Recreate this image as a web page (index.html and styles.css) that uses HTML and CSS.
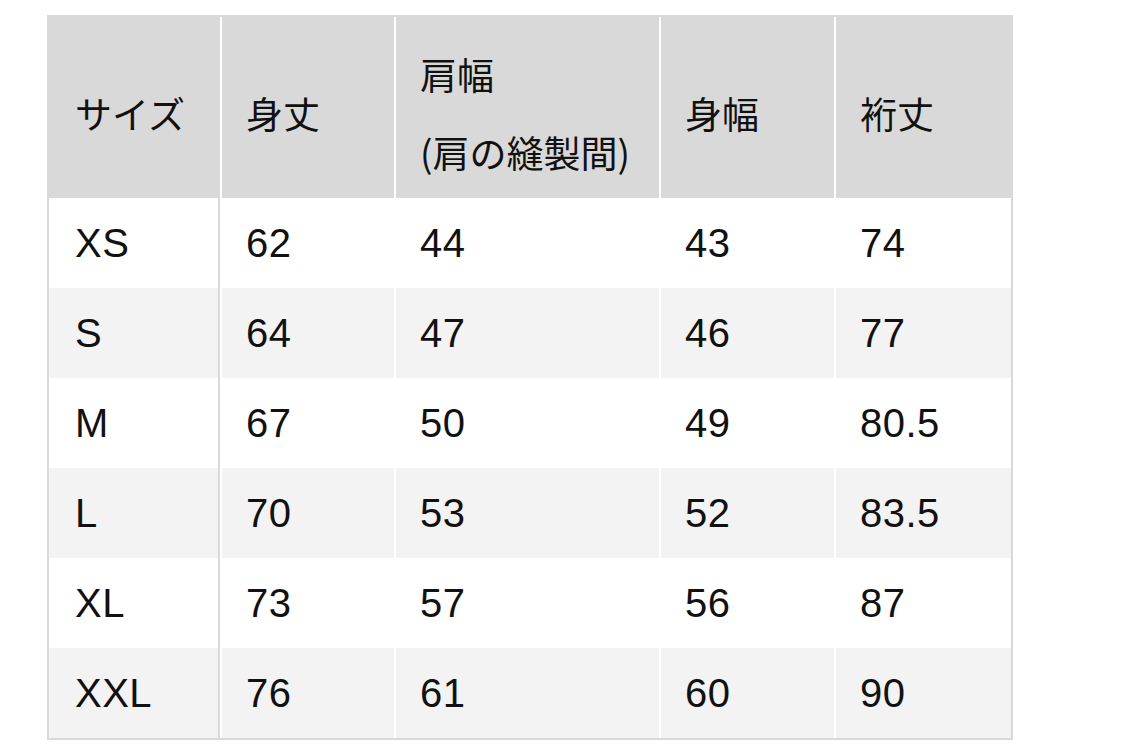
FILE: index.html
```html
<!DOCTYPE html>
<html lang="ja">
<head>
<meta charset="utf-8">
<title>サイズ表</title>
<link rel="stylesheet" href="styles.css">
</head>
<body>
<div class="page">
  <table class="size-table">
    <thead>
      <tr>
        <th class="c1"><span class="jp">サイズ</span></th>
        <th class="c2"><span class="jp">身丈</span></th>
        <th class="c3"><span class="jp">肩幅<br>(肩の縫製間)</span></th>
        <th class="c4"><span class="jp">身幅</span></th>
        <th class="c5"><span class="jp">裄丈</span></th>
      </tr>
    </thead>
    <tbody>
      <tr><td>XS</td><td>62</td><td>44</td><td>43</td><td>74</td></tr>
      <tr><td>S</td><td>64</td><td>47</td><td>46</td><td>77</td></tr>
      <tr><td>M</td><td>67</td><td>50</td><td>49</td><td>80.5</td></tr>
      <tr><td>L</td><td>70</td><td>53</td><td>52</td><td>83.5</td></tr>
      <tr><td>XL</td><td>73</td><td>57</td><td>56</td><td>87</td></tr>
      <tr><td>XXL</td><td>76</td><td>61</td><td>60</td><td>90</td></tr>
    </tbody>
  </table>
</div>
</body>
</html>
```
FILE: styles.css
```css
html, body {
  margin: 0;
  padding: 0;
  background: #ffffff;
}

.page {
  padding: 15px 0 0 47px;
}

.size-table {
  width: 966px;
  table-layout: fixed;
  border-collapse: separate;
  border-spacing: 0;
  border: 2px solid #d9d9d9;
  font-family: "Liberation Sans", "Noto Sans CJK JP", sans-serif;
  color: #111111;
}

.size-table th,
.size-table td {
  box-sizing: border-box;
  text-align: left;
  font-weight: normal;
  vertical-align: middle;
  padding: 0 0 0 24px;
  border-left: 2px solid #ffffff;
}

.size-table th:first-child,
.size-table td:first-child {
  border-left: none;
  border-right: 2px solid #d9d9d9;
  padding-left: 26px;
}

.size-table .c1 { width: 171px; }
.size-table .c2 { width: 174px; }
.size-table .c3 { width: 265px; }
.size-table .c4 { width: 175px; }
.size-table .c5 { width: 177px; }

.size-table thead th {
  height: 181px;
  background: #d9d9d9;
  padding-top: 14px;
  font-size: 37px;
  line-height: 75px;
}

.jp {
  font-family: "Noto Sans CJK JP", sans-serif;
}

.size-table tbody td {
  height: 90px;
  font-size: 40px;
  line-height: 46px;
  letter-spacing: 0.5px;
}

.size-table tbody tr:nth-child(even) td {
  background: #f3f3f3;
}
```
